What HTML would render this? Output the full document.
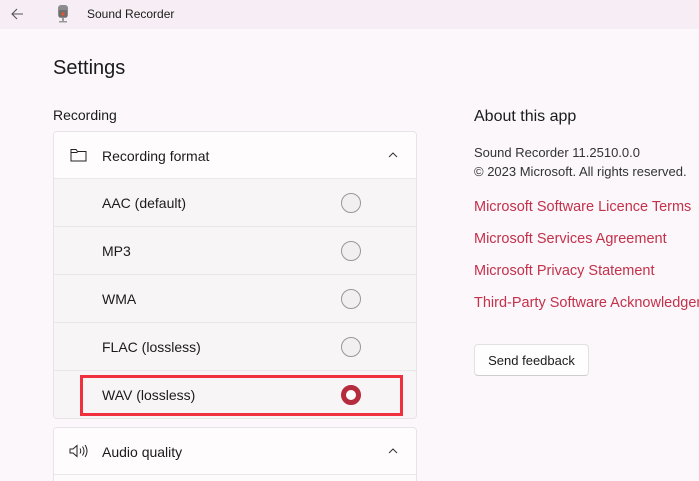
<!DOCTYPE html>
<html style="width:699px;height:481px;overflow:hidden"><head><meta charset="utf-8"><style>
*{margin:0;padding:0;box-sizing:border-box}
body{width:699px;height:481px;overflow:hidden;background:#fbf7fa;font-family:"Segoe UI","Liberation Sans",sans-serif;color:#1b1b1b;position:relative}
.a{position:absolute;white-space:nowrap}
.bar{left:0;top:0;width:699px;height:29px;background:#f6eef4}
.card{left:53px;width:364px;border:1px solid #e7e3e6;border-radius:4px;background:#fdfbfc;overflow:hidden}
.hdr{height:47px;background:#fefcfd;border-bottom:1px solid #ebe7ea;position:relative;font-size:14px}
.row{height:48px;background:#f8f5f7;border-bottom:1px solid #ebe7ea;position:relative;font-size:14px}
.row span,.hdr span{position:absolute;left:48px;top:16px}
.rad{position:absolute;left:287px;top:14px;width:20px;height:20px;border-radius:50%;border:1px solid #9a9799;background:#f1eff0}
.link{color:#c4314b;font-size:14.5px;left:474px}
</style></head><body>
<div class="a bar"></div>
<svg class="a" style="left:10px;top:7px" width="14" height="14" viewBox="0 0 14 14"><path d="M13 7H2M7 2L2 7l5 5" fill="none" stroke="#555" stroke-width="1.1"/></svg>
<svg class="a" style="left:56px;top:4px" width="14" height="20" viewBox="0 0 14 20"><rect x="2" y="1" width="10" height="13" rx="3" fill="#8c8c8c"/><rect x="3" y="6" width="8" height="7" fill="#6f6f6f"/><circle cx="7" cy="10" r="1.6" fill="#e8542f"/><rect x="6" y="14" width="2" height="3" fill="#9a9a9a"/><rect x="3" y="17" width="8" height="1.5" fill="#9a9a9a"/></svg>
<div class="a" style="left:87px;top:7px;font-size:12px">Sound Recorder</div>
<div class="a" style="left:53px;top:57px;font-size:20px">Settings</div>
<div class="a" style="left:53px;top:107px;font-size:14px">Recording</div>
<div class="a card" style="top:131px;height:288px">
<div class="hdr"><svg style="position:absolute;left:16px;top:16px" width="17" height="14" viewBox="0 0 17 14"><path d="M1 1.5h5l1.5 2H16V13H1z M1 4.5h6.5" fill="none" stroke="#222" stroke-width="1"/></svg><span>Recording format</span><svg style="position:absolute;left:334px;top:20px" width="10" height="6" viewBox="0 0 10 6"><path d="M1 5l4-4 4 4" fill="none" stroke="#333" stroke-width="1"/></svg></div>
<div class="row"><span>AAC (default)</span><div class="rad"></div></div>
<div class="row"><span>MP3</span><div class="rad"></div></div>
<div class="row"><span>WMA</span><div class="rad"></div></div>
<div class="row"><span>FLAC (lossless)</span><div class="rad"></div></div>
<div class="row" style="border-bottom:none"><span>WAV (lossless)</span><div class="rad" style="border:5px solid #b52c3e;background:#fff"></div></div>
</div>
<div class="a" style="left:80px;top:375px;width:323px;height:41px;border:3px solid #f0303f"></div>
<div class="a card" style="top:427px;height:54px;border-bottom:none;border-radius:4px 4px 0 0">
<div class="hdr"><svg style="position:absolute;left:15px;top:16px" width="20" height="14" viewBox="0 0 20 14"><path d="M1 5h3l4-3.5v11L4 9H1z M11 4.5q1.5 2.5 0 5 M13.5 2.5q3 4.5 0 9 M16 1q4 6 0 12" fill="none" stroke="#222" stroke-width="1"/></svg><span>Audio quality</span><svg style="position:absolute;left:334px;top:20px" width="10" height="6" viewBox="0 0 10 6"><path d="M1 5l4-4 4 4" fill="none" stroke="#333" stroke-width="1"/></svg></div>
</div>
<div class="a" style="left:474px;top:108px;font-size:16px">About this app</div>
<div class="a" style="left:474px;top:145px;font-size:13px;color:#333">Sound Recorder 11.2510.0.0</div>
<div class="a" style="left:474px;top:164px;font-size:13px;color:#333">© 2023 Microsoft. All rights reserved.</div>
<div class="a link" style="top:199px">Microsoft Software Licence Terms</div>
<div class="a link" style="top:231px">Microsoft Services Agreement</div>
<div class="a link" style="top:263px">Microsoft Privacy Statement</div>
<div class="a link" style="top:295px">Third-Party Software Acknowledgements</div>
<div class="a" style="left:474px;top:344px;width:115px;height:32px;border:1px solid #e3e0e2;border-bottom-color:#d0cdcf;border-radius:4px;background:#fefefe;font-size:13px;text-align:center;line-height:31px">Send feedback</div>
</body></html>
